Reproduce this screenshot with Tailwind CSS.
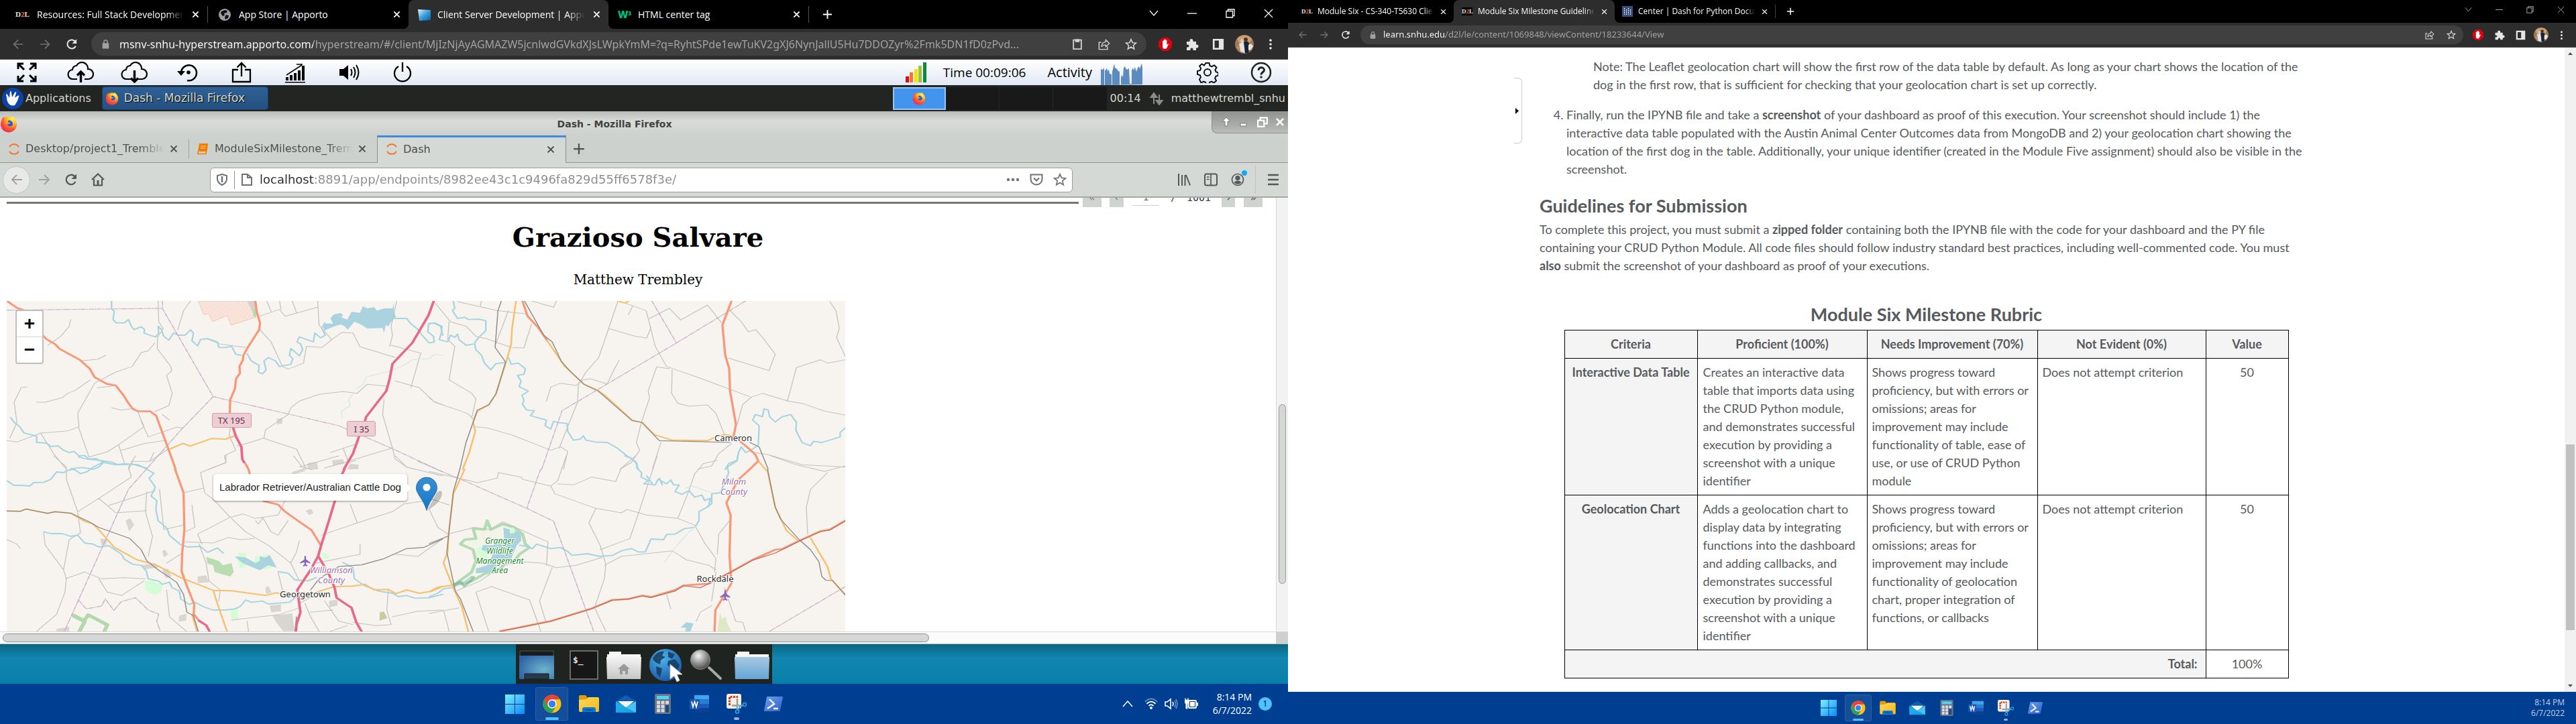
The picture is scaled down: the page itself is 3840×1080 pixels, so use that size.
<!DOCTYPE html>
<html lang="en">
<head>
<meta charset="utf-8">
<meta name="viewport" content="width=device-width, initial-scale=1">
<title>Client Server Development | Apporto</title>
<script src="https://cdn.jsdelivr.net/npm/@tailwindcss/browser@4"></script>
</head>
<body class="bg-white">

<!-- Shared icon sprite -->
<svg width="0" height="0" class="absolute" aria-hidden="true">
  <defs>
    <linearGradient id="gWin" x1="0" y1="0" x2="1" y2="1"><stop offset="0" stop-color="#7df0ff"/><stop offset="1" stop-color="#0a8af5"/></linearGradient>
    <linearGradient id="gFold" x1="0" y1="0" x2="1" y2="1"><stop offset="0" stop-color="#ffd75e"/><stop offset="1" stop-color="#f9b916"/></linearGradient>
    <linearGradient id="gMail" x1="0" y1="0" x2="1" y2="1"><stop offset="0" stop-color="#1cb5ef"/><stop offset="1" stop-color="#1a9be0"/></linearGradient>
    <linearGradient id="gPin" x1="0" y1="0" x2="0" y2="1"><stop offset="0" stop-color="#3b8fd0"/><stop offset="1" stop-color="#1676cc"/></linearGradient>
    <radialGradient id="gFox" cx=".75" cy=".15" r="1"><stop offset="0" stop-color="#fff44f"/><stop offset=".4" stop-color="#ffb02a"/><stop offset=".65" stop-color="#ff5a2a"/><stop offset="1" stop-color="#e5206b"/></radialGradient>
    <linearGradient id="gGrey" x1="0" y1="0" x2="0" y2="1"><stop offset="0" stop-color="#f4f4f4"/><stop offset="1" stop-color="#c4c6c4"/></linearGradient>
    <linearGradient id="gBlueF" x1="0" y1="0" x2="0" y2="1"><stop offset="0" stop-color="#a9c9e2"/><stop offset="1" stop-color="#64a5d3"/></linearGradient>
    <radialGradient id="gScr" cx=".7" cy=".6" r=".8"><stop offset="0" stop-color="#6db5cc"/><stop offset="1" stop-color="#2e60a4"/></radialGradient>
    <radialGradient id="gGlobe" cx=".4" cy=".3" r=".8"><stop offset="0" stop-color="#4cb4e8"/><stop offset="1" stop-color="#1450a0"/></radialGradient>
    <radialGradient id="gLens" cx=".4" cy=".3" r=".7"><stop offset="0" stop-color="#f4f4f4"/><stop offset="1" stop-color="#4c4c4c"/></radialGradient>
    <linearGradient id="gPS" x1="0" y1="0" x2="1" y2="1"><stop offset="0" stop-color="#6ea0ee"/><stop offset="1" stop-color="#2b5fc9"/></linearGradient>
    <linearGradient id="gApp" x1="0" y1="0" x2="1" y2="1"><stop offset="0" stop-color="#e8f7ff"/><stop offset=".5" stop-color="#3ba1dc"/><stop offset="1" stop-color="#0a5c9e"/></linearGradient>
  </defs>
  <symbol id="i-close" viewBox="0 0 12 12"><path d="M1.5 1.5l9 9M10.500 1.500l-9 9" stroke="currentColor" stroke-width="1.800" fill="none"/></symbol>
  <symbol id="i-plus" viewBox="0 0 16 16"><path d="M8 1v14M1 8h14" stroke="currentColor" stroke-width="2" fill="none"/></symbol>
  <symbol id="i-back" viewBox="0 0 20 20"><path d="M18 10H3M10 3l-7 7 7 7" stroke="currentColor" stroke-width="1.900" fill="none"/></symbol>
  <symbol id="i-fwd" viewBox="0 0 20 20"><path d="M2 10h15M10 3l7 7-7 7" stroke="currentColor" stroke-width="1.900" fill="none"/></symbol>
  <symbol id="i-reload" viewBox="0 0 20 20"><path d="M16.500 13A7.200 7.200 0 1 1 15 4.800L17 7" stroke="currentColor" stroke-width="2.300" fill="none"/><path d="M18 1.500V9h-7.500z" fill="currentColor"/></symbol>
  <symbol id="i-lock" viewBox="0 0 12 16"><rect x="0.500" y="6" width="11" height="9.500" rx="1" fill="currentColor"/><path d="M3 6V4a3 3 0 0 1 6 0v2" stroke="currentColor" stroke-width="1.700" fill="none"/></symbol>
  <symbol id="i-clip" viewBox="0 0 20 20"><path d="M3.500 3h13v15h-13z" stroke="currentColor" stroke-width="2" fill="none"/><path d="M6.500 1.500h7v5h-7z" fill="currentColor"/></symbol>
  <symbol id="i-share" viewBox="0 0 20 20"><path d="M5 7H1.500v11.500h14V14" stroke="currentColor" stroke-width="1.600" fill="none"/><path d="M5.500 14c.5-5 3-7.500 7-8V2.500l6 6-6 6V11c-3 0-5 .8-7 3z" stroke="currentColor" stroke-width="1.500" stroke-linejoin="round" fill="none"/></symbol>
  <symbol id="i-star" viewBox="0 0 20 20"><path d="M10 1.800l2.400 5.600 6 .5-4.600 4 1.400 5.900L10 14.600l-5.200 3.200 1.400-5.900-4.600-4 6-.5z" stroke="currentColor" stroke-width="1.700" fill="none"/></symbol>
  <symbol id="i-block" viewBox="0 0 20 20"><path d="M6 0h8l6 6v8l-6 6H6l-6-6V6z" fill="#e2000f"/><path d="M6 9V5.500a.8.800 0 0 1 1.600 0V4a.8.800 0 0 1 1.600 0v-.6a.8.800 0 0 1 1.600 0V4.500a.8.800 0 0 1 1.600 0V11l1.400-1.500c.7-.4 1.300.1 1 .8L12.500 15c-.7 1.500-1.500 2-3 2-2.300 0-3.500-1.500-3.500-4z" fill="#fff"/></symbol>
  <symbol id="i-puzzle" viewBox="0 0 20 20"><path d="M2 6h4.500V4.500a2.500 2.500 0 0 1 5 0V6H16v4.500h1a2.500 2.500 0 0 1 0 5h-1V19h-4.500v-1.500a2 2 0 0 0-4 0V19H2v-4.500h1.500a2 2 0 0 0 0-4H2z" fill="currentColor"/></symbol>
  <symbol id="i-panel" viewBox="0 0 20 20"><path d="M1 1h18v18H1zM4 4v12h7V4z" fill="currentColor" fill-rule="evenodd"/></symbol>
  <symbol id="i-avatar" viewBox="0 0 28 28"><circle cx="14" cy="14" r="14" fill="#9b7a58"/><path d="M3 6a14 14 0 0 1 22 0l-3 6H6z" fill="#c99f74"/><circle cx="11" cy="9" r="3" fill="#e8c4a4"/><circle cx="16" cy="7" r="3" fill="#4a3427"/><path d="M6 13l7-2 2 16-7-2z" fill="#dde4ee"/><path d="M13 10h7l2 8-2 9h-5z" fill="#182337"/><path d="M20 15l4-2 3 4-3 5-4 1z" fill="#e8e2da"/><path d="M2 18l5-2 1 8z" fill="#d98b3c"/></symbol>
  <symbol id="i-kebab" viewBox="0 0 20 20"><g fill="currentColor"><circle cx="10" cy="3.500" r="2"/><circle cx="10" cy="10" r="2"/><circle cx="10" cy="16.500" r="2"/></g></symbol>
  <symbol id="i-chev" viewBox="0 0 14 10"><path d="M1 1l6 7 6-7" stroke="currentColor" stroke-width="1.200" fill="none"/></symbol>
  <symbol id="i-min" viewBox="0 0 14 14"><path d="M0 7h14" stroke="currentColor" stroke-width="1.300"/></symbol>
  <symbol id="i-max" viewBox="0 0 14 14"><path d="M1 3.500h9.500V13H1zM3.500 3.500V1H13v9.500h-2.500" stroke="currentColor" stroke-width="1.300" fill="none"/></symbol>
  <symbol id="i-x" viewBox="0 0 14 14"><path d="M1 1l12 12M13 1L1 13" stroke="currentColor" stroke-width="1.200"/></symbol>
  <symbol id="i-fox" viewBox="0 0 24 24"><circle cx="12" cy="12.500" r="11" fill="url(#gFox)"/><circle cx="12" cy="12.500" r="5.800" fill="#2b5bd7"/><path d="M1.500 9C2 5 4 3 5 1.500c.5 2 2 3 4 3.500 2-.3 3.500.5 3.500 2-2 .5-2 1.500-1.500 2.500 1.500 1 3.500.5 3.500.5-1 2-3.500 2-4.500 2.500 1 4 7 3.500 8 0C19 6 16 4.500 15.500 1c4 2 7.500 6 7.500 11.500 0 6-5 10.500-11 10.500S1 18.500 1 12.500z" fill="url(#gFox)"/></symbol>
  <symbol id="i-jup" viewBox="0 0 20 24"><g fill="none" stroke="#f37726" stroke-width="2.600"><path d="M1.500 8C4 1 16 1 18.500 8"/><path d="M1.500 16c2.500 7 14.500 7 17 0"/></g></symbol>
  <symbol id="i-win" viewBox="0 0 28 28"><g fill="url(#gWin)"><path d="M0 0h13.500v13.500H0zM14.500 0H28v13.500H14.500zM0 14.500h13.500V28H0zM14.500 14.500H28V28H14.500z"/></g></symbol>
  <symbol id="i-chrome" viewBox="0 0 28 28"><circle cx="14" cy="14" r="13.500" fill="#fbc116"/><path d="M2.300 7.300A13.500 13.500 0 0 1 25.700 7.300H14L8 17.500z" fill="#ea4335"/><path d="M2.300 7.300A13.500 13.500 0 0 0 14 27.500L20 17.500 8 17.500z" fill="#30a14e"/><circle cx="14" cy="14" r="6.700" fill="#fff"/><circle cx="14" cy="14" r="5.200" fill="#3b7ded"/></symbol>
  <symbol id="i-files" viewBox="0 0 30 28"><path d="M0 3a2 2 0 0 1 2-2h8l3 4v5H0z" fill="#e09f00"/><path d="M0 8l11-1 3-3h14a2 2 0 0 1 2 2v18a2 2 0 0 1-2 2H2a2 2 0 0 1-2-2z" fill="url(#gFold)"/><path d="M5 26v-4a3 3 0 0 1 3-3h14a3 3 0 0 1 3 3v4z" fill="#0b79d0"/><path d="M9 23h12" stroke="#0a4c98" stroke-width="1.500"/></symbol>
  <symbol id="i-mail" viewBox="0 0 30 28"><path d="M0 10L15 1l15 9-15 12z" fill="#0f5fae"/><path d="M3 10h24L15 20z" fill="#f4f4f4"/><path d="M0 10l15 9 15-9v17H0z" fill="url(#gMail)"/><path d="M30 10v17L15 19z" fill="#46c3f5"/></symbol>
  <symbol id="i-calc" viewBox="0 0 24 30"><rect width="24" height="30" rx="2" fill="#6c7480"/><rect x="3" y="3" width="18" height="5" fill="#4fd4f9"/><g fill="#d8dce2"><path d="M3 10.500h5v5H3zM9.500 10.500h5v5h-5zM16 10.500h5v5h-5zM3 16.500h5v5H3zM9.500 16.500h5v5h-5zM3 22.500h5v5H3zM9.500 22.500h5v5h-5z"/></g><path d="M16 17h5v10.500h-5z" fill="#174a83"/></symbol>
  <symbol id="i-word" viewBox="0 0 30 28"><path d="M7 1h21a1 1 0 0 1 1 1v5.500H7z" fill="#41a5ee"/><path d="M7 7.500h22V14H7z" fill="#2b7cd3"/><path d="M7 14h22v6.500H7z" fill="#185abd"/><path d="M7 20.500h22V26a1 1 0 0 1-1 1H7z" fill="#103f91"/><rect y="7" width="15" height="15" rx="1" fill="#1a57b8"/><path d="M3 10.500l2 8 2.500-8 2.500 8 2-8" stroke="#fff" stroke-width="1.700" fill="none"/></symbol>
  <symbol id="i-snip" viewBox="0 0 30 30"><rect width="22" height="22" rx="3" fill="#f1f1f1"/><path d="M4.500 17V4.500H17" stroke="#d83b01" stroke-width="3" stroke-dasharray="3 1.500" fill="none"/><path d="M16 7v11M8 17.500h16" stroke="#9b9b9b" stroke-width="2.500"/><path d="M15 18l2 6" stroke="#9b9b9b" stroke-width="2"/><circle cx="27" cy="16" r="2.500" fill="none" stroke="#2aa6ea" stroke-width="1.500"/><circle cx="16" cy="26.500" r="2.500" fill="none" stroke="#2aa6ea" stroke-width="1.500"/><path d="M17 24l3-5 5-2" stroke="#2aa6ea" stroke-width="1.500" fill="none"/></symbol>
  <symbol id="i-ps" viewBox="0 0 28 22"><path d="M5 0h22a1 1 0 0 1 1 1l-4 20a1 1 0 0 1-1 1H1a1 1 0 0 1-1-1L4 1a1 1 0 0 1 1-1z" fill="url(#gPS)"/><path d="M8 4l7 7-10 7M14 18h7" stroke="#fff" stroke-width="2.400" fill="none"/></symbol>
  <symbol id="i-plane" viewBox="0 0 16 16"><path d="M8 0c1 0 1.200 1.500 1.200 3v2.500L15.500 10v1.500L9.200 9.500V13l2 1.500V16L8 15l-3.200 1v-1.500l2-1.500V9.500L.5 11.500V10l6.300-4.500V3C6.800 1.500 7 0 8 0z" fill="#8461c4"/></symbol>
</svg>

<div class="grid h-screen grid-cols-2 overflow-hidden">

<!-- ============ Left display ============ -->
<section class="flex min-w-0 flex-col overflow-hidden font-['Open_Sans',sans-serif]">

  <!-- Browser tab strip -->
  <nav class="flex h-[43px] shrink-0 items-center bg-black pl-[11px] text-sm text-white" aria-label="Browser tabs">
    <div class="flex h-full w-[299px] shrink-0 items-center border-r border-r-transparent pr-3 pl-3">
      <span class="w-7 font-['Liberation_Serif',serif] text-[11px] font-bold text-neutral-200">D<b class="text-orange-500">2</b>L</span>
      <a href="#" class="ml-1 flex-1 overflow-hidden whitespace-nowrap [mask-image:linear-gradient(to_right,#000_88%,transparent)]">Resources: Full Stack Development</a>
      <button class="ml-3 size-[11px]" aria-label="Close tab"><svg class="size-full"><use href="#i-close"/></svg></button>
    </div>
    <div class="flex h-full w-[299px] shrink-0 items-center pr-3 pl-[15px]">
      <span class="-ml-4 mr-4 h-[25px] w-px bg-neutral-600"></span>
      <svg class="size-[18px]" viewBox="0 0 18 18"><circle cx="9" cy="9" r="9" fill="#9aa0a6"/><path d="M9 2l4 1-1 3-4 1 1 3-3 1-3-4 1-3zM11 9l4 1-1 4-4 2-1-3z" fill="#111"/></svg>
      <a href="#" class="ml-3 flex-1 overflow-hidden whitespace-nowrap">App Store | Apporto</a>
      <button class="ml-3 size-[11px]" aria-label="Close tab"><svg class="size-full"><use href="#i-close"/></svg></button>
    </div>
    <div class="relative flex h-full w-[298px] shrink-0 items-center rounded-t-lg bg-[#2d2d2d] pr-3 pl-[14px] before:absolute before:bottom-0 before:-left-2 before:size-2 before:bg-[radial-gradient(circle_at_0_0,transparent_8px,#2d2d2d_8px)] after:absolute after:-right-2 after:bottom-0 after:size-2 after:bg-[radial-gradient(circle_at_100%_0,transparent_8px,#2d2d2d_8px)]">
      <svg class="h-[18px] w-[19px]" viewBox="0 0 19 18"><path d="M0 1l19 1v15l-17 1z" fill="url(#gApp)"/></svg>
      <a href="#" class="ml-[10px] flex-1 overflow-hidden whitespace-nowrap [mask-image:linear-gradient(to_right,#000_88%,transparent)]">Client Server Development | Apporto</a>
      <button class="ml-3 size-[11px]" aria-label="Close tab"><svg class="size-full"><use href="#i-close"/></svg></button>
    </div>
    <div class="flex h-full w-[298px] shrink-0 items-center pr-3 pl-[14px]">
      <span class="w-5 text-[15px] font-extrabold text-emerald-500">W<sup class="text-[8px]">3</sup></span>
      <a href="#" class="ml-[10px] flex-1 overflow-hidden whitespace-nowrap">HTML center tag</a>
      <button class="ml-3 size-[11px]" aria-label="Close tab"><svg class="size-full"><use href="#i-close"/></svg></button>
    </div>
    <span class="h-[25px] w-px shrink-0 bg-neutral-600"></span>
    <button class="ml-5 size-[15px] shrink-0" aria-label="New tab"><svg class="size-full"><use href="#i-plus"/></svg></button>
    <div class="ml-auto flex items-center gap-[43px] pr-[22px] pb-1">
      <button class="size-[14px]" aria-label="Search tabs"><svg class="size-full"><use href="#i-chev"/></svg></button>
      <button class="size-[14px]" aria-label="Minimize"><svg class="size-full"><use href="#i-min"/></svg></button>
      <button class="size-[14px]" aria-label="Restore"><svg class="size-full"><use href="#i-max"/></svg></button>
      <button class="size-[14px]" aria-label="Close"><svg class="size-full"><use href="#i-x"/></svg></button>
    </div>
  </nav>

  <!-- Browser toolbar -->
  <div class="flex h-[46px] shrink-0 items-center border-b border-neutral-600 bg-[#2d2d2d] pr-[17px] pl-[18px]">
    <button class="size-[18px] text-neutral-500" aria-label="Back"><svg class="size-full"><use href="#i-back"/></svg></button>
    <button class="ml-[22px] size-[18px] text-neutral-500" aria-label="Forward"><svg class="size-full"><use href="#i-fwd"/></svg></button>
    <button class="ml-[22px] size-[18px] text-neutral-200" aria-label="Reload"><svg class="size-full"><use href="#i-reload"/></svg></button>
    <div class="mr-[18px] ml-5 flex h-[35px] min-w-0 flex-1 items-center rounded-full bg-[#404040] pr-[14px] pl-4 text-neutral-300">
      <svg class="h-[14px] w-[11px] text-neutral-400"><use href="#i-lock"/></svg>
      <input aria-label="Address bar" class="ml-[15px] min-w-0 flex-1 bg-[linear-gradient(90deg,#fff_289px,#a6a6a6_289px)] bg-clip-text font-['Noto_Sans',sans-serif] text-base text-transparent" value="msnv-snhu-hyperstream.apporto.com/hyperstream/#/client/MjIzNjAyAGMAZW5jcnlwdGVkdXJsLWpkYmM=?q=RyhtSPde1ewTuKV2gXJ6NynJallU5Hu7DDOZyr%2Fmk5DN1fD0zPvd...">
      <button class="ml-1 size-[18px]" aria-label="Clipboard"><svg class="size-full"><use href="#i-clip"/></svg></button>
      <button class="ml-[22px] size-[18px]" aria-label="Share"><svg class="size-full"><use href="#i-share"/></svg></button>
      <button class="ml-[22px] size-[18px]" aria-label="Bookmark"><svg class="size-full"><use href="#i-star"/></svg></button>
    </div>
    <div class="flex items-center gap-5 text-neutral-200">
      <button class="size-5" aria-label="AdBlock"><svg class="size-full"><use href="#i-block"/></svg></button>
      <button class="size-5" aria-label="Extensions"><svg class="size-full"><use href="#i-puzzle"/></svg></button>
      <button class="size-[18px]" aria-label="Side panel"><svg class="size-full"><use href="#i-panel"/></svg></button>
      <button class="-mx-1 size-7" aria-label="Profile"><svg class="size-full"><use href="#i-avatar"/></svg></button>
      <button class="h-[18px] w-[18px]" aria-label="Menu"><svg class="size-full"><use href="#i-kebab"/></svg></button>
    </div>
  </div>

  <!-- Remote session toolbar -->
  <div class="flex h-[38px] shrink-0 items-center bg-linear-to-b from-white to-[#e1e9f5] pr-6 pl-6 text-black">
    <div class="flex items-center gap-12">
      <button class="size-8" aria-label="Fullscreen"><svg class="size-full" viewBox="0 0 32 32"><g stroke="#000" stroke-width="3" fill="none"><path d="M12 12L3 3M3 11V3h8M20 12l9-9M21 3h8v8M12 20l-9 9M3 21v8h8M20 20l9 9M29 21v8h-8"/></g></svg></button>
      <button class="-mx-1 h-8 w-10" aria-label="Upload"><svg class="size-full" viewBox="0 0 40 32"><path d="M15 26H9a7 7 0 0 1-1-14 6 6 0 0 1 6-6 9 9 0 0 1 17 5 7.500 7.500 0 0 1 1 15h-6" stroke="#000" stroke-width="2.200" fill="none"/><path d="M20.500 31V16M15 20.500l5.500-5.500 5.500 5.500" stroke="#000" stroke-width="3.400" fill="none"/></svg></button>
      <button class="-mx-1 h-8 w-10" aria-label="Download"><svg class="size-full" viewBox="0 0 40 32"><path d="M15 26H9a7 7 0 0 1-1-14 6 6 0 0 1 6-6 9 9 0 0 1 17 5 7.500 7.500 0 0 1 1 15h-6" stroke="#000" stroke-width="2.200" fill="none"/><path d="M20.500 13v16M15 24.500l5.500 5.500 5.500-5.500" stroke="#000" stroke-width="3.400" fill="none"/></svg></button>
      <button class="size-8" aria-label="Restore files"><svg class="size-full" viewBox="0 0 32 32"><path d="M6 17A11.500 11.500 0 1 1 15 28" stroke="#000" stroke-width="2.500" fill="none"/><path d="M0 14h12l-6 7z"/><circle cx="17" cy="16" r="2.800"/></svg></button>
      <button class="size-8" aria-label="Share"><svg class="size-full" viewBox="0 0 32 32"><path d="M11 12H3v18h26V12h-8M16 22V2M9.500 8.500L16 2l6.500 6.500" stroke="#000" stroke-width="2.300" fill="none"/></svg></button>
      <button class="size-8" aria-label="Performance"><svg class="size-full" viewBox="0 0 32 32"><path d="M2 28h4v-5H2zM8 28h4v-8H8zM14 28h4V17h-4zM20 28h4V13h-4zM26 28h4V6h-4zM1 30h30v1.500H1z"/><path d="M3 20L26 5M18 4h9" stroke="#000" stroke-width="1.500"/></svg></button>
      <button class="size-8" aria-label="Sound"><svg class="size-full" viewBox="0 0 32 32"><path d="M2 11h6l7-6v22l-7-6H2z"/><path d="M19 11q3 5 0 10M23 8q5 8 0 16M27 5q7 11 0 22" stroke="#000" stroke-width="2" fill="none"/></svg></button>
      <button class="size-8" aria-label="Power"><svg class="size-full" viewBox="0 0 32 32"><path d="M10 7a12 12 0 1 0 12 0M16 1v14" stroke="#000" stroke-width="2.300" fill="none"/></svg></button>
    </div>
    <div class="ml-auto flex items-center">
      <svg class="h-[30px] w-[31px]" viewBox="0 0 31 30"><path d="M0 21h5v9H0z" fill="#e2001a"/><path d="M6 15h5v15H6z" fill="#f4772a"/><path d="M13 10h5v20h-5z" fill="#f3e500"/><path d="M19 5h5v25h-5z" fill="#9cc53b"/><path d="M26 0h5v30h-5z" fill="#0a8a3a"/></svg>
      <span class="ml-[25px] text-[19px]">Time 00:09:06</span>
      <span class="ml-8 text-xl">Activity</span>
      <svg class="mt-[6px] ml-[13px] h-8 w-[66px]" viewBox="0 0 66 32"><path d="M0 32V8l3 1 1-3 1 3v23h1V10l2-1 1-3 1 5 2-2 1 6 3 1v16h1V12l2-8 1-4 1 6 3 2 2 3 2 1v20h2V21l1-4 2 3 1-14 2-2 1 3 2 2 3-2 1 23h3V10l2-4 1 4 2-5 2 7 2-6 2-2 1 4 2-6 1-3 1 7v25z" fill="#5b8bbf"/></svg>
      <button class="ml-[77px] size-8" aria-label="Settings"><svg class="size-full" viewBox="0 0 32 32"><g fill="none" stroke="#111" stroke-width="2"><circle cx="16" cy="16" r="5"/><path d="M13.500 2h5l1 4 3 1.300 3.500-2.100 3.500 3.500-2.100 3.500 1.200 3 3.400 1v4.600l-3.700 1-1.200 3 2 3.500-3.400 3.300-3.600-2-3 1.200-1 4h-4l-1-4-3-1.200-3.600 2L4 26.500 6 23l-1.200-3-3.800-1v-5l4-1 1.200-3-2.100-3.500L7.500 3.500 11 5.600z"/></g></svg></button>
      <button class="ml-12 size-8" aria-label="Help"><svg class="size-full" viewBox="0 0 32 32"><circle cx="16" cy="16" r="14" fill="none" stroke="#222" stroke-width="2.500"/><path d="M12 13c0-6 8.500-5 8.500-.5 0 3-4.500 3-4.500 7M16 21.500v3" stroke="#222" stroke-width="3" fill="none"/></svg></button>
    </div>
  </div>

  <!-- Xfce panel -->
  <div class="flex h-[39px] shrink-0 items-center bg-[#222522] font-['DejaVu_Sans',sans-serif] text-base text-[#d3d7cf]">
    <button class="flex items-center"><svg class="ml-[3px] size-[32px]" viewBox="0 0 32 32"><circle cx="16" cy="16" r="16" fill="#0b44a8"/><path d="M7 14c-2-4 0-6 1-4l3 5 1-9c1-2 2-1 2 1l1 7 4-7c1-2 3-1 2 1l-2 7 4-3c2-1 3 0 2 1-1 6-4 9-5 12-5 4-13 0-13-11z" fill="#fff"/></svg><span class="ml-[3px]">Applications</span></button>
    <button class="ml-4 flex h-[35px] w-[248px] items-center rounded-sm border border-[#15406f] bg-linear-to-b from-[#2f6197] to-[#24507f] pl-1 text-[17px] [text-shadow:1px_1px_1px_#000]"><svg class="size-5"><use href="#i-fox"/></svg><span class="ml-2">Dash - Mozilla Firefox</span></button>
    <div class="ml-auto flex h-[35px] items-center">
      <button class="flex h-[34px] w-[79px] items-center justify-center border-2 border-[#9fc6ee] bg-[#4394ef]" aria-label="Workspace 1"><svg class="size-5"><use href="#i-fox"/></svg></button>
      <button class="h-[34px] w-20 border-r border-[#252525] bg-[#191919]" aria-label="Workspace 2"></button>
      <button class="h-[34px] w-20 border-r border-[#252525] bg-[#191919]" aria-label="Workspace 3"></button>
      <button class="h-[34px] w-20 bg-[#191919]" aria-label="Workspace 4"></button>
      <span class="ml-[5px]">00:14</span>
      <svg class="ml-3 h-5 w-[22px]" viewBox="0 0 22 20"><path d="M7 18V5M2.500 8L7 2l4.500 6zM15 4v13M10.500 13l4.500 6 4.500-6z" stroke="#8a8c88" stroke-width="2" fill="#8a8c88"/></svg>
      <span class="mr-1 ml-[11px]">matthewtrembl_snhu</span>
    </div>
  </div>

  <!-- Firefox window -->
  <div class="flex min-h-0 flex-1 flex-col overflow-hidden bg-[#cdd1cd] font-['DejaVu_Sans',sans-serif] text-[#3f4340]">
    <div class="flex h-9 shrink-0 items-start justify-between bg-linear-to-b from-[#b9bbb9] via-[#d9dbd9] via-40% to-[#cdd1cd]">
      <svg class="mt-[6px] h-[26px] w-[26px]"><use href="#i-fox"/></svg>
      <h2 class="pt-[7px] text-sm leading-6 font-bold">Dash - Mozilla Firefox</h2>
      <div class="flex h-[33px] w-[114px] items-center justify-around rounded-bl-lg border-b border-l border-[#8c8f8c] bg-linear-to-b from-[#8f928f] to-[#b9bcb9] pl-2 text-white">
        <button class="size-[14px]" aria-label="Roll up"><svg class="size-full" viewBox="0 0 14 14"><path d="M7 0l6 6H9v7H5V6H1z" fill="#fff" stroke="#777"/></svg></button>
        <button class="size-[14px]" aria-label="Minimize"><svg class="size-full" viewBox="0 0 14 14"><path d="M2 9h9v4H2z" fill="#fff" stroke="#777"/></svg></button>
        <button class="size-[16px]" aria-label="Maximize"><svg class="size-full" viewBox="0 0 14 14"><path d="M1 5h8v8H1zM4 5V1.500h9V9H9" fill="none" stroke="#fff" stroke-width="2"/></svg></button>
        <button class="size-[12px]" aria-label="Close"><svg class="size-full" viewBox="0 0 14 14"><path d="M1 1l12 12M13 1L1 13" stroke="#fff" stroke-width="3"/></svg></button>
      </div>
    </div>
    <nav class="flex h-[41px] shrink-0 items-center border-b border-[#8f928f] text-base text-[#4d514e]" aria-label="Firefox tabs">
      <div class="flex h-full w-[281px] shrink-0 items-center pr-4 pl-3">
        <svg class="h-[19px] w-[18px]"><use href="#i-jup"/></svg>
        <a href="#" class="ml-2 flex-1 overflow-hidden whitespace-nowrap [mask-image:linear-gradient(to_right,#000_82%,transparent)]">Desktop/project1_Trembley</a>
        <button class="ml-2 size-[12px]" aria-label="Close tab"><svg class="size-full"><use href="#i-close"/></svg></button>
      </div>
      <span class="h-[29px] w-px bg-[#a2a5a2]"></span>
      <div class="flex h-full w-[280px] shrink-0 items-center pr-4 pl-3">
        <svg class="h-[18px] w-4" viewBox="0 0 16 18"><path d="M3 1h13l-2 12H1z" fill="#f57c00"/><path d="M1 13v3.500h12L15 4" stroke="#f57c00" stroke-width="1.600" fill="none"/><path d="M5 5h8M5 8h7" stroke="#ffd9a8" stroke-width="1.200"/></svg>
        <a href="#" class="ml-[10px] flex-1 overflow-hidden whitespace-nowrap [mask-image:linear-gradient(to_right,#000_82%,transparent)]">ModuleSixMilestone_Trembley</a>
        <button class="ml-2 size-[12px]" aria-label="Close tab"><svg class="size-full"><use href="#i-close"/></svg></button>
      </div>
      <div class="-mb-px flex h-[41px] w-[282px] shrink-0 items-center border-t-3 border-r border-l border-t-[#3c8be0] border-r-[#8f928f] border-l-[#8f928f] bg-[#d5d9d5] pr-4 pb-[3px] pl-3">
        <svg class="h-[19px] w-[18px]"><use href="#i-jup"/></svg>
        <a href="#" class="ml-2 flex-1 overflow-hidden whitespace-nowrap">Dash</a>
        <button class="ml-2 size-[12px]" aria-label="Close tab"><svg class="size-full"><use href="#i-close"/></svg></button>
      </div>
      <button class="ml-[10px] size-[18px]" aria-label="New tab"><svg class="size-full"><use href="#i-plus"/></svg></button>
    </nav>
    <div class="flex h-[52px] shrink-0 items-center border-b-2 border-[#a5a8a5] bg-[#d5d9d5] pr-3 pl-1 text-[#55585a]">
      <button class="flex size-[41px] items-center justify-center rounded-full border border-[#c2c4c2] bg-[#e7e8e7] text-[#9fa29f]" aria-label="Back"><svg class="size-5"><use href="#i-back"/></svg></button>
      <button class="ml-[11px] size-5 text-[#9fa29f]" aria-label="Forward"><svg class="size-full"><use href="#i-fwd"/></svg></button>
      <button class="ml-5 size-5" aria-label="Reload"><svg class="size-full"><use href="#i-reload"/></svg></button>
      <button class="ml-5 size-5" aria-label="Home"><svg class="size-full" viewBox="0 0 20 20"><path d="M1 10l9-8.500L19 10M4 9v9.500h12V9" stroke="currentColor" stroke-width="2.200" fill="none"/><path d="M8.500 11h3v8h-3z" fill="currentColor"/></svg></button>
      <div class="ml-[157px] flex h-[37px] min-w-0 max-w-[1286px] flex-1 items-center rounded-md border border-[#9a9d9a] bg-white pr-2 pl-2 text-[#6f7274]">
        <svg class="size-[18px]" viewBox="0 0 18 18"><path d="M9 1l7 2v5c0 5-3 7-7 9-4-2-7-4-7-9V3z" fill="none" stroke="currentColor" stroke-width="2"/><path d="M9 4v9" stroke="currentColor" stroke-width="2.500"/></svg>
        <span class="mx-[9px] h-[27px] w-px bg-[#8f9294]"></span>
        <svg class="size-[18px]" viewBox="0 0 18 18"><path d="M2 1h8l6 5v11H2zM10 1v5h6" fill="none" stroke="currentColor" stroke-width="2"/></svg>
        <input aria-label="Location" class="ml-[10px] min-w-0 flex-1 bg-[linear-gradient(90deg,#2b2b2b_81px,#8a8c8e_81px)] bg-clip-text text-lg text-transparent" value="localhost:8891/app/endpoints/8982ee43c1c9496fa829d55ff6578f3e/">
        <button class="size-5" aria-label="Page actions"><svg class="size-full" viewBox="0 0 20 20"><g fill="currentColor"><circle cx="3" cy="10" r="2.200"/><circle cx="10" cy="10" r="2.200"/><circle cx="17" cy="10" r="2.200"/></g></svg></button>
        <button class="ml-[15px] size-5" aria-label="Pocket"><svg class="size-full" viewBox="0 0 20 20"><path d="M1.500 2.500h17V9c0 5-4 8.500-8.500 8.500S1.500 14 1.500 9z" fill="none" stroke="currentColor" stroke-width="2"/><path d="M6 7.500l4 4 4-4" fill="none" stroke="currentColor" stroke-width="2.200"/></svg></button>
        <button class="ml-[15px] size-5" aria-label="Bookmark"><svg class="size-full"><use href="#i-star"/></svg></button>
      </div>
      <div class="ml-auto flex items-center gap-5">
        <button class="size-5" aria-label="Library"><svg class="size-full" viewBox="0 0 20 20"><path d="M2 1v18M7 3v16M11.500 3v16M13 3l6 15.500" stroke="currentColor" stroke-width="2" fill="none"/></svg></button>
        <button class="size-5" aria-label="Sidebar"><svg class="size-full" viewBox="0 0 20 20"><rect x="1" y="1.500" width="18" height="17" rx="2.500" fill="none" stroke="currentColor" stroke-width="2"/><path d="M10 2v16M4 6h3.500M4 9.500h3.500" stroke="currentColor" stroke-width="1.700"/></svg></button>
        <button class="relative size-5" aria-label="Account"><svg class="size-full" viewBox="0 0 20 20"><circle cx="10" cy="10" r="8.500" fill="none" stroke="currentColor" stroke-width="1.700"/><circle cx="10" cy="7.500" r="3.600" fill="currentColor"/><path d="M4.500 14c3-3.500 8-3.500 11 0-3 3.500-8 3.500-11 0z" fill="currentColor"/></svg><span class="absolute -top-1 -right-1 size-2 rounded-full bg-[#12a8f5]"></span></button>
        <span class="-mx-1 h-[42px] w-px bg-[#bfc2bf]"></span>
        <button class="size-5" aria-label="Menu"><svg class="size-full" viewBox="0 0 20 20"><path d="M2 3h16M2 10h16M2 17h16" stroke="currentColor" stroke-width="2.400"/></svg></button>
      </div>
    </div>

    <!-- Dashboard page -->
    <div class="flex min-h-0 flex-1 overflow-hidden bg-white text-black">
      <main class="min-w-0 flex-1 overflow-hidden">
        <div class="flex h-4 items-start pl-[10px]">
          <div class="mt-[6px] h-[3px] w-[1598px] bg-[#737773]"></div>
          <div class="ml-[6px] flex h-[14px] items-end overflow-hidden font-['DejaVu_Sans_Mono',monospace] text-[15px] leading-7 text-neutral-500">
            <button class="h-7 w-7 bg-[#d0d4d0]" aria-label="First page">«</button>
            <button class="ml-3 h-7 w-[21px] bg-[#d0d4d0]" aria-label="Previous page">‹</button>
            <input aria-label="Page" class="mb-[2px] ml-[13px] h-[26px] w-10 border-b border-[#cfcfcf] text-center" value="1">
            <span class="ml-[17px] text-neutral-700">/</span>
            <span class="ml-[15px] text-neutral-700">1001</span>
            <button class="ml-4 h-7 w-5 bg-[#d0d4d0] text-neutral-700" aria-label="Next page">›</button>
            <button class="ml-[13px] h-7 w-7 bg-[#d0d4d0] text-neutral-700" aria-label="Last page">»</button>
          </div>
        </div>
        <h1 class="mt-5 text-center font-['DejaVu_Serif',serif] text-[40px] leading-[46px] font-bold">Grazioso Salvare</h1>
        <p class="mt-7 mb-5 text-center font-['DejaVu_Serif',serif] text-xl leading-6">Matthew Trembley</p>

        <div class="relative ml-[10px] h-[625px] w-[1250px] overflow-hidden bg-[#f7f3ee]">
          <svg class="absolute inset-0" width="1250" height="493" viewBox="10 449 1250 493" fill="none" stroke-linejoin="round" stroke-linecap="round" aria-label="Map of central Texas">
            <defs>
              <pattern id="hatch" width="12" height="12" patternUnits="userSpaceOnUse" patternTransform="rotate(30)"><rect width="12" height="12" fill="#f9e4dc"/><path d="M0 0v12" stroke="#f6c9be" stroke-width="2"/></pattern>
            </defs>
            <!-- Land use and water areas -->
            <g transform="translate(0 300) scale(.42092 .33333)">
              <path d="M703 447L900 447 905 520 880 530 818 555 805 512 752 540 740 503 722 508Z" fill="url(#hatch)" stroke="#f5b8ab" stroke-width="2"/>
              <path d="M875 447h27l5 70-12-20z" fill="#d9cfcc"/><path d="M895 480l12 5v35l-10-3z" fill="#b5dcb6"/>
              <path d="M1145 548L1180 548 1170 525 1182 508 1205 500 1215 510 1208 520 1230 530 1245 495 1275 500 1285 470 1300 480 1325 475 1335 490 1360 480 1390 480 1395 455 1395 490 1402 520 1385 540 1375 560 1366 555 1360 590 1355 568 1300 570 1275 550 1255 540 1232 575 1220 560 1208 552 1190 558 1170 568 1148 580Z" fill="#aad3df"/>
              <path d="M980 975l20-5v25l-18 5zM1090 1172l32-5 5 33h-37zM1240 1175l30 5v20h-40zM1175 1160l40-5 5 20-40 8z" fill="#d8d4d0"/>
            </g>
            <g transform="translate(0 680) scale(.42092 .33333)">
              <path d="M730 452L775 470 790 490 820 480 828 520 815 540 760 520 755 490 735 482Z" fill="#b9dcb0"/>
              <path d="M512 565L545 552 555 572 575 575 570 612 545 622 515 600ZM845 432l25 3 5 60-25 8-10-40zM905 450l45-10 15 60-25 8-40-25zM1140 430l25 10v20l-20 2zM815 690l28-8v50h-22z" fill="#d4fcd6"/>
              <path d="M830 450L870 455 905 480 920 470 920 450 940 455 955 443 980 500 950 490 920 512 860 480Z" fill="#a8d3df"/>
              <path d="M445 290l15-12 15 30-18 30zM575 425l10-5 10 22-15 12zM1088 35l30-5 8 25-25 10zM1030 75l50-22v15l-38 14zM955 670l40-5v30l-35 5zM965 715l70-10 8 78-40 2-25-40zM940 590l10-8 12 30-20 6zM1082 245l20-8 8 20-15 8zM355 370l25 5-5 25h-15zM500 490l50-10 10 20-50 8zM575 510l20-5 12 35-20 8zM700 540l30-5 10 30-40 5zM635 715l25-8v30l-28 5zM1165 650l30-8v28l-28 8zM200 775l45-10v20h-45z" fill="#d9d5d1"/>
              <path d="M1345 700l15-3 12 30-28 10z" fill="#c9cba4"/>
              <path d="M282 783L300 742 262 718 M262 714L298 738 312 712 380 756 370 785" stroke="#b2d8ab" stroke-width="14"/>
            </g>
            <g transform="translate(640 680) scale(.42092 .33333)">
              <path d="M110 395L125 375 165 370 155 325 195 330 205 290 218 330 260 305 300 320 330 350 340 395 355 410 320 440 300 470 270 480 240 520 200 525 150 560 85 580 150 520 165 470 155 420Z" stroke="#b4dab0" stroke-width="11" fill="#f2f4ea"/>
              <path d="M165 415l35-20 10 60-30 5z" fill="#d4fcd6"/>
              <path d="M262 320L325 345 325 380 310 400 290 460 240 480 235 520 165 525 165 505 205 490 225 440 185 420 190 400 225 400 265 370Z" fill="#aad3df"/>
              <path d="M285 325l15-5 3 25-18 3z" fill="#d4fcd6"/>
              <path d="M1030 700l5 30 15-10 5 30 15 35h-50z" fill="#dfe8c4"/><path d="M910 745l25 5-10 35h-20l5-15-20-2z" fill="#aad3df"/>
            </g>
            <!-- Minor roads -->
            <g stroke="#bfc3bf">
              <g transform="translate(0 300) scale(.42092 .33333)" stroke-width="3"><path d="M560 447L562 540 578 570 558 610 557 660 605 740 608 760 590 780 610 860 598 915 548 942M548 635L525 670 500 678 468 740 410 765 335 815 275 950 280 1010 240 1028 145 1038 60 1078 25 1072M130 900L160 900 220 880 240 860 265 848 320 800M95 832L75 835 50 900 60 990 35 1060M278 1012L315 1145 380 1122 420 1090 510 1010 488 942M430 1115L510 1085 590 1070M420 1090L440 1170M525 1055L625 1012 650 1015M500 985L525 1055M250 530L245 560 215 605 170 645M375 690L345 708 285 715M145 1040L190 1130 235 1200M675 447L650 490 630 575M920 575L960 630 1000 740 1020 752 1075 725 1085 650 1140 655 1175 620 1130 555 1125 447M1175 620L1210 588 1250 590 1275 652 1400 700M945 447L960 495M920 515L990 485 1010 515 1125 475M1385 645L1490 680 1455 835M1405 447L1385 560 1390 600 1380 650M1400 805L1485 835 1535 895 1568 912M1370 828L1300 820 1265 860 1215 852 1130 865 1060 895 1030 925 1020 955 940 1025 935 1060 880 1082 840 1095M935 1062L1050 1110 1085 1200M815 1015L812 1050 835 1115 795 1140 800 1170 740 1200M1360 890L1355 955 1390 1105 1400 1155 1440 1190 1470 1200M1390 1105L1150 1195M1170 1125L1255 1090M990 447L995 485M1035 447L1050 500M395 925L430 935 480 927M575 955L600 980M345 835L380 830 410 825 425 845M735 618L780 640 870 655M455 1200L470 1165 530 1165 595 1110M530 1165L545 1125M1215 1105L1235 1170 1260 1160"/></g>
              <g transform="translate(640 300) scale(.42092 .33333)" stroke-width="3"><path d="M20 455L75 540 130 560 165 605 200 615 290 655 335 657 362 550M100 450L240 490 345 505M0 880L20 900 135 950 155 975M165 1010L205 1015 300 1050 430 1115 465 1100 490 1120 475 1200M668 447L635 570 600 700 555 765 528 820 525 900 490 1010 460 1105M635 570L730 605 770 612 785 565M690 455L768 490 800 650 840 740 965 795 1140 878 1180 860 1270 895 1320 905 1400 940 1473 958M1140 878L1110 910 1090 1000M860 755L858 860 880 905 920 918 985 912 1015 950 1045 1045M850 750L805 742 775 850 780 880 750 995 733 1080 745 1115 715 1170 675 1200M1268 895L1300 745 1385 710 1410 725 1473 710M1418 450L1440 490 1452 570 1442 610 1473 695M1065 490L1105 540 1130 585 1155 575 1180 610 1225 685 1203 758 1060 703M780 525L850 480 890 532 985 465 1035 545M415 895L430 832 465 815 520 825 545 800 570 795 630 818 650 765 672 712M70 540L65 620 90 650 70 800 150 860 165 885 150 970M363 447L440 475 450 447M1150 1125L1200 1135 1320 1180 1400 1185 1473 1190M820 1080L790 1200M1070 1085L1025 1130 1000 1185 950 1200M235 640L280 490M180 470L185 447M705 508L720 470"/></g>
              <g transform="translate(0 680) scale(.42092 .33333)" stroke-width="3"><path d="M190 0L235 50 235 105 275 250 285 345 245 375 225 510 235 550 230 610 200 710 130 785M155 345L160 400 225 510M232 550L300 520 360 550 440 545 515 550M275 250L350 190 465 95 455 50 480 0M385 222L550 155M350 190L410 255 520 245M520 160L515 250 540 360 525 450M650 165L720 145M710 75L800 30 800 0M710 75L725 165 760 200 815 275 700 350 715 395M815 275L860 260 905 280 985 265 1010 200M655 385L755 390 810 365 850 375 900 370M820 280L870 340 950 400 1030 480M680 220L690 320 655 340M1400 0L1440 50 1568 90M1265 300L1390 250 1430 215 1540 195M1240 215L1265 300 1140 355M1120 480L1275 440 1275 395M1400 440L1480 450 1568 372M705 395L730 480 740 560 780 600 775 650M1375 600L1370 690 1385 755 1330 760 1250 745M820 735L990 710 1060 680M1390 720L1480 695 1568 690M985 520L1000 600 1060 640M905 290L915 305 930 280M930 275L960 340 985 355 1020 290M1060 380L1050 430 1030 480 1060 560M1040 0L1070 50 1100 60M1060 50L1200 0M25 375L60 395 72 415M565 150L580 330 650 310M590 600L600 720 660 785M350 550L380 610 430 625 510 560M1080 660L1100 720 1130 785M1150 650L1200 740 1250 755M1100 700L1180 690M1060 660L1120 620M590 480L640 440M1170 785L1230 760M875 740L880 785"/></g>
              <g transform="translate(640 680) scale(.42092 .33333)" stroke-width="3"><path d="M485 0L455 110 430 135 330 105 325 95 245 75 240 100 170 120 0 70M430 135L445 170 590 235 680 255 700 240 770 265 880 280 940 310 975 390 1015 460 1010 520M590 235L565 300 605 400 625 485 620 550 585 680 625 785M455 125L510 130 575 95 660 115 680 55 730 0M807 0L740 260 710 370 605 420M880 280L915 170 940 80 970 35 1020 20M1210 0L1300 40 1400 70 1473 45M1410 75L1350 150 1335 230 1340 350M340 475L400 480 450 500 520 490 610 455M435 500L390 650 412 740M65 350L160 320 215 330 260 295 420 385 415 490M620 490L680 450 860 425 910 465 990 490 1015 510M1063 290L1025 350 1020 440M95 605L180 560 260 490 340 475M165 610L220 585 355 645 395 785M165 610L210 785M1000 670L960 700 945 740M1045 590L1085 740 1110 745 1120 785M840 620L855 685M0 705L105 680M50 690L70 785M1015 520L1000 650M0 240L30 320 65 350M0 190L70 220"/></g>
            </g>
            <!-- Waterways -->
            <g stroke="#a5d4e2">
              <g transform="translate(0 300) scale(.42092 .33333)" stroke-width="5.500"><path d="M395 447L395 480 405 495 400 530 412 545 440 545 455 530 465 560 475 575 500 562 512 575 510 590 530 600 552 608 562 590 560 560 572 575 580 605 598 622 615 590 632 600 655 600 675 576 685 590 680 625 700 648 710 620 735 615 770 630 775 655 800 655 820 650 835 685 853 690M875 683L890 715 910 730 918 735 915 765 930 773 942 755 935 715 950 700 975 715 990 740 1030 730 1037 705 1025 690 1030 660 1045 675 1060 693 1072 665 1065 640 1052 630 1060 608 1110 630 1115 590 1135 612 1152 600 1140 570 1150 545M1400 525L1440 525 1455 548 1480 575 1495 600 1520 635 1538 630 1535 605 1515 585 1518 550 1535 545 1560 560 1568 600"/><path d="M38 968L50 990 70 1010 85 1038 130 1052 130 1080 165 1083 180 1098 205 1095 225 1115 245 1125 262 1120 280 1140 300 1138 315 1155 350 1160 395 1168 420 1180 470 1178 520 1195M370 1165L350 1190 330 1200M250 1198L290 1192 330 1200"/></g>
              <g transform="translate(0 300) scale(.42092 .33333)" stroke="#d2e8e4" stroke-width="3"><path d="M1568 690L1540 685 1520 705 1460 710 1430 735 1370 765 1300 785 1285 820 1262 840M1250 862L1235 890 1240 915 1210 940 1212 970"/></g>
              <g transform="translate(640 300) scale(.42092 .33333)" stroke-width="5.500"><path d="M85 447L90 480 82 490 100 525 125 520 140 530 175 528 200 535 200 580 175 610 160 635 165 665 185 690 195 725 218 755 235 728 270 722M0 548L20 545 45 560 42 595 35 620 65 630 75 600 90 610 100 595 105 620 130 645 155 640M280 700L290 730 315 725 340 750 335 775 312 780 325 805 318 830 350 850 328 870 335 890 330 910 345 935 372 938 358 960 380 968 415 980 410 1005 430 1020 440 985 460 992 488 995 490 1030 510 1070 535 1065 545 1050 555 1070 590 1078 630 1080 665 1105 700 1140 730 1165 740 1200M1048 1200L1060 1175 1090 1160 1095 1125 1105 1100 1120 1125 1140 1115 1165 1090 1168 1005 1145 980 1155 955 1180 965 1185 930 1200 935 1205 965 1225 988 1250 965 1280 955 1300 990 1298 1025 1320 1080 1350 1095 1360 1075 1390 1080 1430 1065 1455 1055 1455 1035 1473 1015"/></g>
              <g transform="translate(0 680) scale(.42092 .33333)" stroke-width="5.500"><path d="M25 112L50 132 75 132 105 135 120 120 155 118 180 105 200 72 225 75 240 65 262 60 285 80 310 70 330 50 370 25M278 5L310 15 340 12 370 30 410 40 440 35 490 40 520 60 545 78 528 100 550 140 535 180 555 200 552 240 560 290 592 325 600 355 640 398 665 408 710 405 735 432 770 412 790 435M155 340L180 348 220 348 250 360 275 355 300 390 330 395 350 408 385 402 430 440 440 462 470 485 500 490 518 515 525 550 560 560 575 575 600 565 610 590 635 605 640 640 670 665 690 655 720 675 755 690 800 690 830 685 850 675 870 645 890 655 930 650 950 663 1025 655 1045 635M985 518L1020 525 1045 555 1090 560 1120 545M1215 478L1250 500 1255 550 1290 580 1340 605 1390 615 1410 630 1440 625 1470 637 1520 635 1568 620"/></g>
              <g transform="translate(640 680) scale(.42092 .33333)" stroke-width="5.500"><path d="M692 0L715 10 735 35 735 55 752 75 750 95 775 110 760 125 800 130 810 105 840 125 855 108 865 130 885 130 870 160 895 172 920 155 940 185 965 175 975 200 995 190 990 225 955 250 955 290 940 320 905 325 870 350 840 352 830 375 785 372 765 430 740 430 715 415 680 425 650 445 605 450 560 438 505 445 490 428 465 410 430 415 380 395 365 415 345 405 320 400M1092 0L1090 22 1055 50 1060 75 1050 110 1030 165 1000 170 1000 215 985 225M770 90L790 125M815 100L825 130"/><path d="M0 630L30 615 50 595 80 590 130 560 150 540"/></g>
              <g transform="translate(640 680) scale(.42092 .33333)" stroke="#d2e8e4" stroke-width="3"><path d="M835 475L860 425 920 340 950 310M905 145L930 135 1000 165"/></g>
            </g>
            <g stroke="#6fb08a" stroke-width="4" opacity=".6"><path d="M676 873l10-5 6 6 8-6 6-7"/></g>
            <!-- County boundaries -->
            <g stroke="#c7aec8">
              <g transform="translate(0 300) scale(.42092 .33333)" stroke-width="3.500" stroke-dasharray="16 5 3 5"><path d="M25 488L575 480M575 447L575 480 755 875 1200 1005 1385 1105 1568 1212M755 875L640 1025 518 1200"/></g>
              <g transform="translate(640 300) scale(.42092 .33333)" stroke-width="3.500" stroke-dasharray="16 5 3 5"><path d="M788 447L875 635M1120 447L875 635 470 938 398 1200"/></g>
              <g transform="translate(0 680) scale(.42092 .33333)" stroke-width="3.500" stroke-dasharray="16 5 3 5"><path d="M518 60L455 150 385 345 228 785M278 645L305 685 360 672 373 640 403 692 430 652 480 635 525 690 562 708 555 740 568 785"/></g>
              <g transform="translate(640 680) scale(.42092 .33333)" stroke-width="3.500" stroke-dasharray="16 5 3 5"><path d="M394 60L345 235M-40 25L130 115 345 235 440 292 480 430 582 785M1205 785L1473 585"/></g>
            </g>
            <!-- Secondary highways -->
            <g stroke="#f8c06d">
              <g transform="translate(0 300) scale(.42092 .33333)" stroke-width="6"><path d="M597 1112L648 1084 673 1096 748 1063 800 1065 832 1050"/></g>
              <g transform="translate(640 300) scale(.42092 .33333)" stroke-width="6"><path d="M307 447L293 570 290 640 272 720 235 865 212 910 170 940 155 990 163 1030 140 1130 118 1200M415 620L480 740 548 820 598 848 622 870 718 980 755 992 797 1045 860 1070 985 1072 1020 1052 1050 1045 1075 1052M1165 1163L1190 1200M668 447L695 457 705 447"/></g>
              <g transform="translate(0 680) scale(.42092 .33333)" stroke-width="6"><path d="M25 246L72 248 92 238 168 257 195 250 252 257 300 293 330 305 360 345 405 410 485 465 550 487 640 545 755 602 820 604 940 625 975 613 1000 618M1125 608L1185 585 1250 583 1292 575 1325 600 1375 598 1402 617 1440 600 1485 615 1530 605 1568 585M755 602L775 680 804 785M680 710L698 785"/></g>
              <g transform="translate(640 680) scale(.42092 .33333)" stroke-width="6"><path d="M125 60L100 130 85 170 68 350 65 430 50 480 80 575 115 675 138 785M0 608L30 588 88 578M1190 60L1198 70 1225 230 1265 335 1302 375M1350 367L1410 495 1422 550 1473 622"/></g>
            </g>
            <!-- Trunk roads -->
            <g stroke="#f89878">
              <g transform="translate(0 300) scale(.42092 .33333)" stroke-width="8"><path d="M25 447L60 478 92 492M120 560L165 618 195 640 212 662 282 710 318 750 335 788 378 818 410 825 438 870 455 905 472 932 488 940 532 941 553 960 597 1112 622 1200M904 447L910 500 921 545 918 575 880 650 862 690 860 712 848 740 850 770 836 795 832 840 815 890 814 947M866 1168L880 1200"/></g>
              <g transform="translate(640 300) scale(.42092 .33333)" stroke-width="8"><path d="M330 447L348 515 385 565 415 620M1070 447L1038 555 1048 690 1062 750 1065 850 1086 1000 1078 1050M1100 1075L1125 1100 1155 1135 1165 1163 1135 1200"/></g>
              <g transform="translate(0 680) scale(.42092 .33333)" stroke-width="8"><path d="M620 60L650 165 653 330 645 440 643 515 655 560 688 665 686 708 705 738M880 60L888 100 905 170 935 203 985 218 1008 248 1055 290 1103 332 1137 402"/></g>
              <g transform="translate(640 680) scale(.42092 .33333)" stroke-width="8"><path d="M1135 60L1100 100 1080 140 1052 210 1067 265 1063 445 1070 570 1013 690 1010 785M250 785L428 740 575 683 648 645 707 640 755 625 785 632 870 600 900 580 990 572 1045 535 1145 465 1225 420 1250 417 1310 380 1385 337 1418 330 1473 290"/></g>
            </g>
            <!-- Railways -->
            <g stroke="#8b8b88">
              <g transform="translate(640 300) scale(.42092 .33333)" stroke-width="3.500"><path d="M255 447L243 490 233 655 270 720 237 860 210 912 170 935 155 990 130 1080 108 1200M337 447L405 600 435 630 468 718 498 760 548 820 598 850 718 982 752 990 815 1072 1065 1080M1135 1080L1168 1100 1200 1200"/></g>
              <g transform="translate(0 680) scale(.42092 .33333)" stroke-width="3.500"><path d="M25 247L72 248 92 238 168 257 195 250 252 257 315 295 350 320 460 370 500 420 520 470 560 510 625 565 650 620 662 700 685 715 702 785M1100 600L1130 550 1200 495 1280 488 1360 460 1440 415 1500 410 1568 372M1045 785L1050 720"/></g>
              <g transform="translate(640 680) scale(.42092 .33333)" stroke-width="3.500"><path d="M108 60L85 160 62 430 92 605 110 640 155 785M0 392L65 360M1198 60L1225 230 1245 285 1310 375 1350 420 1380 475 1390 540 1405 557 1428 558 1473 622"/><path stroke="#b5705f" d="M250 786L428 741 575 684 648 646 707 641 755 627 785 634 870 605 900 582 960 590 1045 537 1145 467 1225 435 1310 382 1385 339 1418 332 1473 292"/></g>
            </g>
            <!-- Motorways -->
            <g stroke="#e8688a">
              <g transform="translate(0 300) scale(.42092 .33333)" stroke-width="9"><path d="M1536 447L1518 510 1460 635 1390 728 1380 795 1368 850 1297 965 1292 985M1272 1052L1250 1130 1218 1200M826 1015L835 1052 855 1100 858 1155 864 1168"/></g>
              <g transform="translate(0 680) scale(.42092 .33333)" stroke-width="9"><path d="M1220 60L1210 85 1185 205 1165 290 1137 402 1127 448 1100 510 1053 600 1064 700 1050 755 1048 785M1127 448L1165 530 1185 590 1192 635 1215 655 1245 680 1262 745 1280 785M705 738L730 758 742 785"/></g>
            </g>
            <!-- Road shields -->
            <g stroke="#d99aa8" fill="#eccfd5"><rect x="316.500" y="616.500" width="58" height="21" rx="2"/><rect x="517.500" y="628.500" width="42" height="22" rx="2"/></g>
            <g font-family="Noto Sans, sans-serif" font-size="13" text-anchor="middle" stroke-linejoin="round" paint-order="stroke">
              <g fill="#6f2a4a"><text x="345" y="632">TX 195</text><text x="539" y="645">I 35</text></g>
              <g fill="#2b2b2b" stroke="#fff" stroke-width="2"><text x="1093" y="658">Cameron</text><text x="1066" y="868">Rockdale</text><text x="455" y="891">Georgetown</text></g>
              <g fill="#a272aa" stroke="#fff" stroke-width="2" font-style="italic"><text x="1094" y="723">Milam</text><text x="1094" y="738">County</text><text x="494" y="855">Williamson</text><text x="494" y="870">County</text></g>
              <g fill="#208a30" stroke="#fff" stroke-width="2" font-size="12" font-style="italic"><text x="745" y="811">Granger</text><text x="745" y="826">Wildlife</text><text x="745" y="841">Management</text><text x="745" y="855">Area</text></g>
            </g>
            <use href="#i-plane" x="447" y="829" width="16" height="16"/><use href="#i-plane" x="1073" y="880" width="16" height="16"/>
            <!-- Marker -->
            <path d="M637 761l14-26q8-7 8 2-2 12-18 22z" fill="#000" opacity=".2"/>
            <path d="M636 761C631 744 620.500 737 620.500 727.500a15.500 15.500 0 0 1 31 0C651.500 737 641 744 636 761z" fill="url(#gPin)" stroke="#2a6ea8"/>
            <circle cx="636" cy="727" r="5.500" fill="#fff"/>
          </svg>
          <div class="absolute top-[13px] left-[13px] w-[42px] overflow-hidden rounded border-2 border-black/25 bg-white font-['Liberation_Sans',sans-serif] text-[28px] leading-[38px] font-bold">
            <button class="block h-[39px] w-full border-b border-neutral-300" aria-label="Zoom in">+</button>
            <button class="block h-[38px] w-full" aria-label="Zoom out">−</button>
          </div>
          <div role="tooltip" class="absolute top-[258px] left-[308px] rounded border border-white bg-white px-2 py-2 font-['Liberation_Sans',sans-serif] text-[15px] leading-[22px] whitespace-nowrap text-[#222] shadow-[0_1px_3px_rgba(0,0,0,0.4)] after:absolute after:top-[13px] after:-right-[14px] after:border-[7px] after:border-transparent after:border-l-white">Labrador Retriever/Australian Cattle Dog</div>
        </div>
      </main>
      <div class="flex w-[18px] shrink-0 justify-center border-l border-[#d8dad8] bg-[#f1f2f1]"><div class="mt-[308px] h-[268px] w-[11px] rounded-full border border-[#9a9c9a] bg-[#d4d7d4]"></div></div>
    </div>
    <div class="flex h-[19px] shrink-0 border-t border-b border-[#d8dad8] border-b-[#b8bcb8] bg-[#fbfbfb]">
      <div class="mt-[2px] ml-1 h-[13px] w-[1381px] rounded-full border border-[#8e908e] bg-[#d6d7d6]"></div>
      <div class="ml-auto w-[18px] bg-[#cdd1cd]"></div>
    </div>
  </div>

  <!-- Remote desktop dock -->
  <div class="flex h-[59px] shrink-0 justify-center bg-linear-to-b from-[#0a6682] via-[#1286b0] via-35% to-[#067fa8]">
    <div class="flex w-[382px] items-center gap-3 bg-[#202421] pt-[3px] pl-[5px]">
      <button class="h-[44px] w-[52px]" aria-label="Show desktop"><svg class="size-full" viewBox="0 0 52 44"><path d="M1 1h50v8H1z" fill="#1a1d1f" stroke="#555"/><path d="M0 8h52v35H0z" fill="url(#gScr)"/><path d="M8 35h36v8H8z" fill="#27394e" stroke="#16202c"/></svg></button>
      <button class="ml-[11px] h-[44px] w-[43px]" aria-label="Terminal"><svg class="size-full" viewBox="0 0 43 44"><rect x="1" y="1" width="41" height="42" fill="#171717" stroke="#6b6b6b" stroke-width="2"/><text x="5" y="19" font-family="DejaVu Sans Mono, monospace" font-weight="bold" font-size="13" fill="#e4e4e4">$_</text></svg></button>
      <button class="h-[44px] w-[52px]" aria-label="Home folder"><svg class="size-full" viewBox="0 0 52 44"><path d="M4 2h18v4h29v8H1V6h3z" fill="#f6f6f6"/><path d="M0 10h52l-1 33H1z" fill="url(#gGrey)"/><path d="M26 20l-9 8h3v8h4v-5h4v5h4v-8h3z" fill="#999b99"/></svg></button>
      <button class="relative h-[48px] w-[48px]" aria-label="Web browser"><svg class="size-full" viewBox="0 0 48 48"><circle cx="24" cy="24" r="24" fill="url(#gGlobe)"/><path d="M5 14c5-9 12-11 17-10l-3 6 5 2-7 5-1 6-5-2-4-3zM28 4l10 4-4 7-6-3zM10 26l9 3-3 13-5-5zM28 18l10-3 7 9-4 10-8-4-6-6z" fill="#153a60" opacity=".85"/></svg><svg class="absolute top-[22px] left-[30px] h-7 w-5" viewBox="0 0 20 28"><path d="M1 1v22l6-5 4 9 4-2-4-9h8z" fill="#fff" stroke="#c9c9c9"/></svg></button>
      <button class="h-[46px] w-[48px]" aria-label="Search"><svg class="size-full" viewBox="0 0 48 46"><path d="M29 27l17 16" stroke="#a8a8a8" stroke-width="4" stroke-linecap="round"/><circle cx="16" cy="15" r="14.500" fill="url(#gLens)" stroke="#8d8d8d"/></svg></button>
      <button class="ml-[7px] h-[44px] w-[52px]" aria-label="Files"><svg class="size-full" viewBox="0 0 52 44"><path d="M4 2h18v4h29v8H1V6h3z" fill="#f6f6f6"/><path d="M0 10h52l-1 33H1z" fill="url(#gBlueF)"/></svg></button>
    </div>
  </div>

  <!-- Windows taskbar -->
  <footer class="grid h-[60px] shrink-0 grid-cols-[1fr_auto_1fr] items-center bg-[#003e92] text-white">
    <span></span>
    <div class="flex items-center">
      <button class="flex w-[55px] justify-center" aria-label="Start"><svg class="h-[29px] w-[29px]"><use href="#i-win"/></svg></button>
      <button class="relative flex h-[50px] w-[55px] items-center justify-center" aria-label="Chrome"><span class="absolute inset-y-0 left-[3px] w-[49px] rounded border border-white/10 bg-white/8"></span><svg class="relative size-[28px]"><use href="#i-chrome"/></svg><span class="absolute bottom-[1px] h-1 w-5 rounded-full bg-[#4cc2ff]"></span></button>
      <button class="flex w-[55px] justify-center" aria-label="File Explorer"><svg class="h-[28px] w-[30px]"><use href="#i-files"/></svg></button>
      <button class="flex w-[55px] justify-center" aria-label="Mail"><svg class="h-[28px] w-[30px]"><use href="#i-mail"/></svg></button>
      <button class="flex w-[55px] justify-center" aria-label="Calculator"><svg class="h-[30px] w-[24px]"><use href="#i-calc"/></svg></button>
      <button class="flex w-[55px] justify-center" aria-label="Word"><svg class="h-[28px] w-[30px]"><use href="#i-word"/></svg></button>
      <button class="relative flex h-[50px] w-[55px] items-center justify-center" aria-label="Snipping Tool"><svg class="size-[30px]"><use href="#i-snip"/></svg><span class="absolute bottom-[1px] h-1 w-2 rounded-full bg-[#9fb0cf]"></span></button>
      <button class="flex w-[55px] justify-center" aria-label="PowerShell"><svg class="h-[22px] w-[28px]"><use href="#i-ps"/></svg></button>
    </div>
    <div class="flex items-center justify-end pr-6">
      <svg class="h-[10px] w-4" viewBox="0 0 16 10"><path d="M1 9l7-8 7 8" stroke="#fff" stroke-width="1.500" fill="none"/></svg>
      <svg class="ml-[17px] h-[18px] w-5" viewBox="0 0 20 18"><g fill="none" stroke="#fff" stroke-width="1.800"><path d="M1 6c5-6 13-6 18 0" opacity=".4"/><path d="M3.500 9c4-4.500 9-4.500 13 0M6.500 12c2-2.500 5-2.500 7 0"/></g><circle cx="10" cy="15" r="2" fill="#fff"/></svg>
      <svg class="ml-[10px] h-[18px] w-5" viewBox="0 0 20 18"><g fill="none" stroke="#fff" stroke-width="1.600"><path d="M1 6h3l5-4v14l-5-4H1zM12 6q2 3 0 6"/><path d="M15 4q3 5 0 10M17 2q4 7 0 14" opacity=".4"/></g></svg>
      <svg class="ml-[10px] h-[18px] w-5" viewBox="0 0 20 18"><path d="M1 0v3M5 0v3M0 3h6v3c0 2-1 2-2 2.500V16H2V8.500C1 8 0 8 0 6z" fill="#fff" stroke="#fff"/><rect x="6" y="4" width="11" height="11" rx="1" fill="none" stroke="#fff" stroke-width="1.800"/><path d="M8 6h7v7H8zM18 7h2v5h-2z" fill="#fff"/></svg>
      <time class="ml-[22px] text-right text-sm leading-5">8:14 PM<br>6/7/2022</time>
      <span class="ml-[10px] flex size-5 items-center justify-center rounded-full bg-[#4cc2ff] text-xs text-black">1</span>
    </div>
  </footer>
</section>

<!-- ============ Right display ============ -->
<section class="flex min-w-0 flex-col overflow-hidden font-['Open_Sans',sans-serif]">

  <nav class="flex h-[34px] shrink-0 items-center bg-black pl-2 text-xs text-white" aria-label="Browser tabs">
    <div class="flex h-full w-[239px] shrink-0 items-center pr-[11px] pl-3">
      <span class="w-4 font-['Liberation_Serif',serif] text-[9px] font-bold text-neutral-200">D<b class="text-orange-500">2</b>L</span>
      <a href="#" class="ml-2 flex-1 overflow-hidden whitespace-nowrap [mask-image:linear-gradient(to_right,#000_92%,transparent)]">Module Six - CS-340-T5630 Client</a>
      <button class="ml-[10px] size-[9px]" aria-label="Close tab"><svg class="size-full"><use href="#i-close"/></svg></button>
    </div>
    <div class="relative flex h-full w-[240px] shrink-0 items-center rounded-t-lg bg-[#2d2d2d] pr-[11px] pl-3 before:absolute before:bottom-0 before:-left-2 before:size-2 before:bg-[radial-gradient(circle_at_0_0,transparent_8px,#2d2d2d_8px)] after:absolute after:-right-2 after:bottom-0 after:size-2 after:bg-[radial-gradient(circle_at_100%_0,transparent_8px,#2d2d2d_8px)]">
      <span class="w-4 bg-black font-['Liberation_Serif',serif] text-[9px] font-bold text-neutral-200">D<b class="text-orange-500">2</b>L</span>
      <a href="#" class="ml-2 flex-1 overflow-hidden whitespace-nowrap [mask-image:linear-gradient(to_right,#000_92%,transparent)]">Module Six Milestone Guidelines</a>
      <button class="ml-[10px] size-[9px]" aria-label="Close tab"><svg class="size-full"><use href="#i-close"/></svg></button>
    </div>
    <div class="flex h-full w-[239px] shrink-0 items-center pr-[11px] pl-[11px]">
      <svg class="size-4" viewBox="0 0 16 16"><rect width="16" height="16" fill="#3a4f7c"/><path d="M3.500 3v10M6.500 5v8M9.500 3v10M12.500 5v8" stroke="#e4e9f5" stroke-width="1.200" stroke-dasharray="2 1"/></svg>
      <a href="#" class="ml-2 flex-1 overflow-hidden whitespace-nowrap [mask-image:linear-gradient(to_right,#000_92%,transparent)]">Center | Dash for Python Documentation</a>
      <button class="ml-[10px] size-[9px]" aria-label="Close tab"><svg class="size-full"><use href="#i-close"/></svg></button>
    </div>
    <span class="h-5 w-px shrink-0 bg-neutral-700"></span>
    <button class="ml-4 size-3 shrink-0" aria-label="New tab"><svg class="size-full"><use href="#i-plus"/></svg></button>
    <div class="ml-auto flex items-center gap-[35px] pr-[17px] pb-[6px] text-neutral-400">
      <button class="size-[11px]" aria-label="Search tabs"><svg class="size-full"><use href="#i-chev"/></svg></button>
      <button class="size-[11px]" aria-label="Minimize"><svg class="size-full"><use href="#i-min"/></svg></button>
      <button class="size-[11px]" aria-label="Restore"><svg class="size-full"><use href="#i-max"/></svg></button>
      <button class="size-[11px]" aria-label="Close"><svg class="size-full"><use href="#i-x"/></svg></button>
    </div>
  </nav>

  <div class="flex h-[37px] shrink-0 items-center border-b border-neutral-600 bg-[#2d2d2d] pr-[14px] pl-[15px]">
    <button class="size-[14px] text-neutral-500" aria-label="Back"><svg class="size-full"><use href="#i-back"/></svg></button>
    <button class="ml-[18px] size-[14px] text-neutral-500" aria-label="Forward"><svg class="size-full"><use href="#i-fwd"/></svg></button>
    <button class="ml-[18px] size-[14px] text-neutral-200" aria-label="Reload"><svg class="size-full"><use href="#i-reload"/></svg></button>
    <div class="mr-[14px] ml-[15px] flex h-7 min-w-0 flex-1 items-center rounded-full bg-[#404040] pr-[11px] pl-[14px] text-neutral-300">
      <svg class="h-[11px] w-[9px] text-neutral-400"><use href="#i-lock"/></svg>
      <input aria-label="Address bar" class="ml-[11px] min-w-0 flex-1 bg-[linear-gradient(90deg,#fff_93px,#a6a6a6_93px)] bg-clip-text font-['Noto_Sans',sans-serif] text-[13px] text-transparent" value="learn.snhu.edu/d2l/le/content/1069848/viewContent/18233644/View">
      <button class="ml-4 size-[14px]" aria-label="Share"><svg class="size-full"><use href="#i-share"/></svg></button>
      <button class="ml-[18px] size-[14px]" aria-label="Bookmark"><svg class="size-full"><use href="#i-star"/></svg></button>
    </div>
    <div class="flex items-center gap-4 text-neutral-200">
      <button class="size-4" aria-label="AdBlock"><svg class="size-full"><use href="#i-block"/></svg></button>
      <button class="size-4" aria-label="Extensions"><svg class="size-full"><use href="#i-puzzle"/></svg></button>
      <button class="size-[15px]" aria-label="Side panel"><svg class="size-full"><use href="#i-panel"/></svg></button>
      <button class="-mx-1 size-[22px]" aria-label="Profile"><svg class="size-full"><use href="#i-avatar"/></svg></button>
      <button class="size-[15px]" aria-label="Menu"><svg class="size-full"><use href="#i-kebab"/></svg></button>
    </div>
  </div>

  <!-- Assignment page -->
  <div class="flex min-h-0 flex-1 overflow-hidden bg-white">
    <aside class="flex w-[349px] shrink-0 items-start justify-end pt-[45px]">
      <button class="flex h-[98px] w-3 items-center rounded-r-md border border-l-0 border-[#c9cbd3] pl-[2px]" aria-label="Open navigation panel"><svg class="h-[9px] w-[5px]" viewBox="0 0 5 9"><path d="M0 0l5 4.500L0 9z"/></svg></button>
    </aside>
    <main class="ml-[26px] w-[1153px] shrink-0 pt-[15px] font-['Lato',sans-serif] text-[18px] leading-[27px] text-[#565a5c]">
      <p class="ml-20">Note: The Leaflet geolocation chart will show the first row of the data table by default. As long as your chart shows the location of the dog in the first row, that is sufficient for checking that your geolocation chart is set up correctly.</p>
      <ol start="4" class="mt-[18px] ml-10 list-decimal">
        <li>Finally, run the IPYNB file and take a <strong>screenshot</strong> of your dashboard as proof of this execution. Your screenshot should include 1) the interactive data table populated with the Austin Animal Center Outcomes data from MongoDB and 2) your geolocation chart showing the location of the first dog in the table. Additionally, your unique identifier (created in the Module Five assignment) should also be visible in the screenshot.</li>
      </ol>
      <h2 class="mt-[23px] text-[27px] leading-9 font-bold">Guidelines for Submission</h2>
      <p class="mt-1">To complete this project, you must submit a <strong>zipped folder</strong> containing both the IPYNB file with the code for your dashboard and the PY file containing your CRUD Python Module. All code files should follow industry standard best practices, including well-commented code. You must <strong>also</strong> submit the screenshot of your dashboard as proof of your executions.</p>
      <table class="mx-auto mt-[41px] w-[1080px] table-fixed border-collapse">
        <caption class="pb-[5px] text-[27px] leading-9 font-bold">Module Six Milestone Rubric</caption>
        <colgroup><col class="w-[198px]"><col class="w-[253px]"><col class="w-[254px]"><col class="w-[251px]"><col></colgroup>
        <thead class="bg-[#f4f4f4]">
          <tr>
            <th class="border border-black px-2 py-[7px]">Criteria</th>
            <th class="border border-black px-2 py-[7px]">Proficient (100%)</th>
            <th class="border border-black px-2 py-[7px]">Needs Improvement (70%)</th>
            <th class="border border-black px-2 py-[7px]">Not Evident (0%)</th>
            <th class="border border-black px-2 py-[7px]">Value</th>
          </tr>
        </thead>
        <tbody class="align-top">
          <tr>
            <th class="border border-black bg-[#f4f4f4] px-2 py-[7px]">Interactive Data Table</th>
            <td class="border border-black px-2 py-[7px]">Creates an interactive data table that imports data using the CRUD Python module, and demonstrates successful execution by providing a screenshot with a unique identifier</td>
            <td class="border border-black px-[7px] py-[7px]">Shows progress toward proficiency, but with errors or omissions; areas for improvement may include functionality of table, ease of use, or use of CRUD Python module</td>
            <td class="border border-black px-[7px] py-[7px]">Does not attempt criterion</td>
            <td class="border border-black px-2 py-[7px] text-center">50</td>
          </tr>
          <tr>
            <th class="border border-black bg-[#f4f4f4] px-2 py-[7px]">Geolocation Chart</th>
            <td class="border border-black px-2 py-[7px]">Adds a geolocation chart to display data by integrating functions into the dashboard and adding callbacks, and demonstrates successful execution by providing a screenshot with a unique identifier</td>
            <td class="border border-black px-[7px] py-[7px]">Shows progress toward proficiency, but with errors or omissions; areas for improvement may include functionality of geolocation chart, proper integration of functions, or callbacks</td>
            <td class="border border-black px-[7px] py-[7px]">Does not attempt criterion</td>
            <td class="border border-black px-2 py-[7px] text-center">50</td>
          </tr>
          <tr>
            <th colspan="4" class="border border-black bg-[#f4f4f4] px-3 py-[7px] text-right">Total:</th>
            <td class="border border-black px-2 py-[7px] text-center">100%</td>
          </tr>
        </tbody>
      </table>
    </main>
    <div class="ml-auto flex w-[17px] shrink-0 flex-col items-center bg-[#f1f1f1] py-[7px]">
      <svg class="h-1 w-[7px]" viewBox="0 0 7 4"><path d="M0 4l3.500-4L7 4z" fill="#505050"/></svg>
      <div class="mt-[581px] h-[277px] w-[13px] bg-[#c1c1c1]"></div>
      <svg class="mt-auto h-1 w-[7px]" viewBox="0 0 7 4"><path d="M0 0l3.500 4L7 0z" fill="#505050"/></svg>
    </div>
  </div>

  <footer class="grid h-12 shrink-0 grid-cols-[1fr_auto_1fr] items-center bg-[#003e92] text-white">
    <span></span>
    <div class="flex items-center">
      <button class="flex w-11 justify-center" aria-label="Start"><svg class="size-6"><use href="#i-win"/></svg></button>
      <button class="relative flex h-10 w-11 items-center justify-center" aria-label="Chrome"><span class="absolute inset-y-0 left-[2px] w-10 rounded border border-white/10 bg-white/8"></span><svg class="relative size-[22px]"><use href="#i-chrome"/></svg><span class="absolute bottom-[1px] h-[3px] w-4 rounded-full bg-[#4cc2ff]"></span></button>
      <button class="flex w-11 justify-center" aria-label="File Explorer"><svg class="h-[22px] w-6"><use href="#i-files"/></svg></button>
      <button class="flex w-11 justify-center" aria-label="Mail"><svg class="h-[22px] w-6"><use href="#i-mail"/></svg></button>
      <button class="flex w-11 justify-center" aria-label="Calculator"><svg class="h-6 w-5"><use href="#i-calc"/></svg></button>
      <button class="flex w-11 justify-center" aria-label="Word"><svg class="h-[22px] w-6"><use href="#i-word"/></svg></button>
      <button class="relative flex h-10 w-11 items-center justify-center" aria-label="Snipping Tool"><svg class="size-6"><use href="#i-snip"/></svg><span class="absolute bottom-[1px] h-[3px] w-[6px] rounded-full bg-[#9fb0cf]"></span></button>
      <button class="flex w-11 justify-center" aria-label="PowerShell"><svg class="h-[18px] w-[22px]"><use href="#i-ps"/></svg></button>
    </div>
    <time class="pr-[17px] text-right text-xs leading-4 text-[#c3d0e6]">8:14 PM<br>6/7/2022</time>
  </footer>
</section>
</div>
</body>
</html>
